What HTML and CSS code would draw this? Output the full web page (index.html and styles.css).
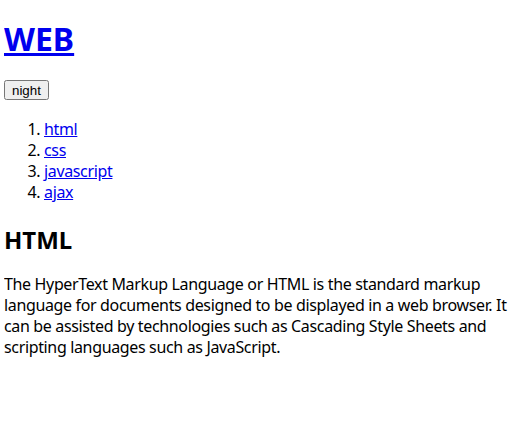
FILE: index.html
```html
<!DOCTYPE html>
<html lang="ko">
<head>
  <meta charset="UTF-8">
  <title>WEB1 - HTML</title>
  <link rel="stylesheet" href="styles.css">
</head>
<body>
  <h1><a href="index.html">WEB</a></h1>
  <input type="button" value="night" class="mode-btn">
  <ol>
    <li><a href="1.html">html</a></li>
    <li><a href="2.html">css</a></li>
    <li><a href="3.html">javascript</a></li>
    <li><a href="4.html">ajax</a></li>
  </ol>
  <h2>HTML</h2>
  <p>The HyperText Markup Language or HTML is the standard markup language for documents designed to be displayed in a web browser. It can be assisted by technologies such as Cascading Style Sheets and scripting languages such as JavaScript.</p>
</body>
</html>
```
FILE: styles.css
```css
body {
  font-family: 'Noto Sans', 'Noto Sans CJK KR', sans-serif;
  font-size: 16px;
  line-height: 21px;
  letter-spacing: -0.35px;
  margin: 8px 4px;
  color: #000;
}
h1 {
  font-size: 32px;
  line-height: 38px;
  letter-spacing: 0;
  margin: 12px 0 21px;
}
a {
  color: #0000ee;
}
.mode-btn {
  font-family: 'Liberation Sans', Arial, sans-serif;
  font-size: 13.33px;
  letter-spacing: 0;
  height: 20px;
}
ol {
  margin: 19px 0 16px;
  padding-left: 40px;
}
h2 {
  font-size: 24px;
  line-height: 32px;
  letter-spacing: 0;
  margin: 21px 0 18px;
}
p {
  margin: 0 0 16px;
}
```
